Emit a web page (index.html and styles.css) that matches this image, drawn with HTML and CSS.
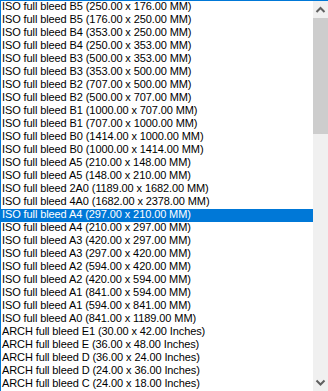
FILE: index.html
```html
<!DOCTYPE html>
<html>
<head>
<meta charset="utf-8">
<link rel="stylesheet" href="styles.css">
</head>
<body>
<div class="listbox">
  <ul class="items">
    <li>ISO full bleed B5 (250.00 x 176.00 MM)</li>
    <li>ISO full bleed B5 (176.00 x 250.00 MM)</li>
    <li>ISO full bleed B4 (353.00 x 250.00 MM)</li>
    <li>ISO full bleed B4 (250.00 x 353.00 MM)</li>
    <li>ISO full bleed B3 (500.00 x 353.00 MM)</li>
    <li>ISO full bleed B3 (353.00 x 500.00 MM)</li>
    <li>ISO full bleed B2 (707.00 x 500.00 MM)</li>
    <li>ISO full bleed B2 (500.00 x 707.00 MM)</li>
    <li>ISO full bleed B1 (1000.00 x 707.00 MM)</li>
    <li>ISO full bleed B1 (707.00 x 1000.00 MM)</li>
    <li>ISO full bleed B0 (1414.00 x 1000.00 MM)</li>
    <li>ISO full bleed B0 (1000.00 x 1414.00 MM)</li>
    <li>ISO full bleed A5 (210.00 x 148.00 MM)</li>
    <li>ISO full bleed A5 (148.00 x 210.00 MM)</li>
    <li>ISO full bleed 2A0 (1189.00 x 1682.00 MM)</li>
    <li>ISO full bleed 4A0 (1682.00 x 2378.00 MM)</li>
    <li class="selected">ISO full bleed A4 (297.00 x 210.00 MM)</li>
    <li>ISO full bleed A4 (210.00 x 297.00 MM)</li>
    <li>ISO full bleed A3 (420.00 x 297.00 MM)</li>
    <li>ISO full bleed A3 (297.00 x 420.00 MM)</li>
    <li>ISO full bleed A2 (594.00 x 420.00 MM)</li>
    <li>ISO full bleed A2 (420.00 x 594.00 MM)</li>
    <li>ISO full bleed A1 (841.00 x 594.00 MM)</li>
    <li>ISO full bleed A1 (594.00 x 841.00 MM)</li>
    <li>ISO full bleed A0 (841.00 x 1189.00 MM)</li>
    <li>ARCH full bleed E1 (30.00 x 42.00 Inches)</li>
    <li>ARCH full bleed E (36.00 x 48.00 Inches)</li>
    <li>ARCH full bleed D (36.00 x 24.00 Inches)</li>
    <li>ARCH full bleed D (24.00 x 36.00 Inches)</li>
    <li>ARCH full bleed C (24.00 x 18.00 Inches)</li>
  </ul>
  <div class="scrollbar">
    <div class="sb-btn">
      <svg width="15" height="17" viewBox="0 0 15 17"><polyline points="3.5,11 7.5,7 11.5,11" fill="none" stroke="#606060" stroke-width="2"/></svg>
    </div>
    <div class="sb-thumb"></div>
    <div class="sb-track"></div>
    <div class="sb-btn">
      <svg width="15" height="17" viewBox="0 0 15 17"><polyline points="3.5,6.5 7.5,10.5 11.5,6.5" fill="none" stroke="#606060" stroke-width="2"/></svg>
    </div>
  </div>
</div>
</body>
</html>
```

FILE: styles.css
```css
html, body {
  margin: 0;
  padding: 0;
  background: #ffffff;
}
body {
  width: 328px;
  height: 391px;
  overflow: hidden;
}
.listbox {
  display: flex;
  height: 391px;
  box-sizing: border-box;
  border-top: 1px solid #0078d7;
  border-left: 1px solid #0078d7;
  background: #ffffff;
}
.items {
  flex: 1;
  margin: 0;
  padding: 0;
  list-style: none;
  overflow: hidden;
  font-family: "Liberation Sans", Arial, sans-serif;
  font-size: 11px;
  letter-spacing: -0.1px;
  color: #000000;
}
.items li {
  height: 13px;
  line-height: 11px;
  padding-left: 1px;
  white-space: nowrap;
  box-sizing: border-box;
}
.items li.selected {
  background: #0078d7;
  color: #ffffff;
}
.scrollbar {
  width: 15px;
  display: flex;
  flex-direction: column;
  background: #f0f0f0;
}
.sb-btn {
  height: 17px;
  flex: none;
  background: #f0f0f0;
}
.sb-btn svg {
  display: block;
}
.sb-thumb {
  height: 116px;
  flex: none;
  background: #cdcdcd;
}
.sb-track {
  flex: 1;
}
```
